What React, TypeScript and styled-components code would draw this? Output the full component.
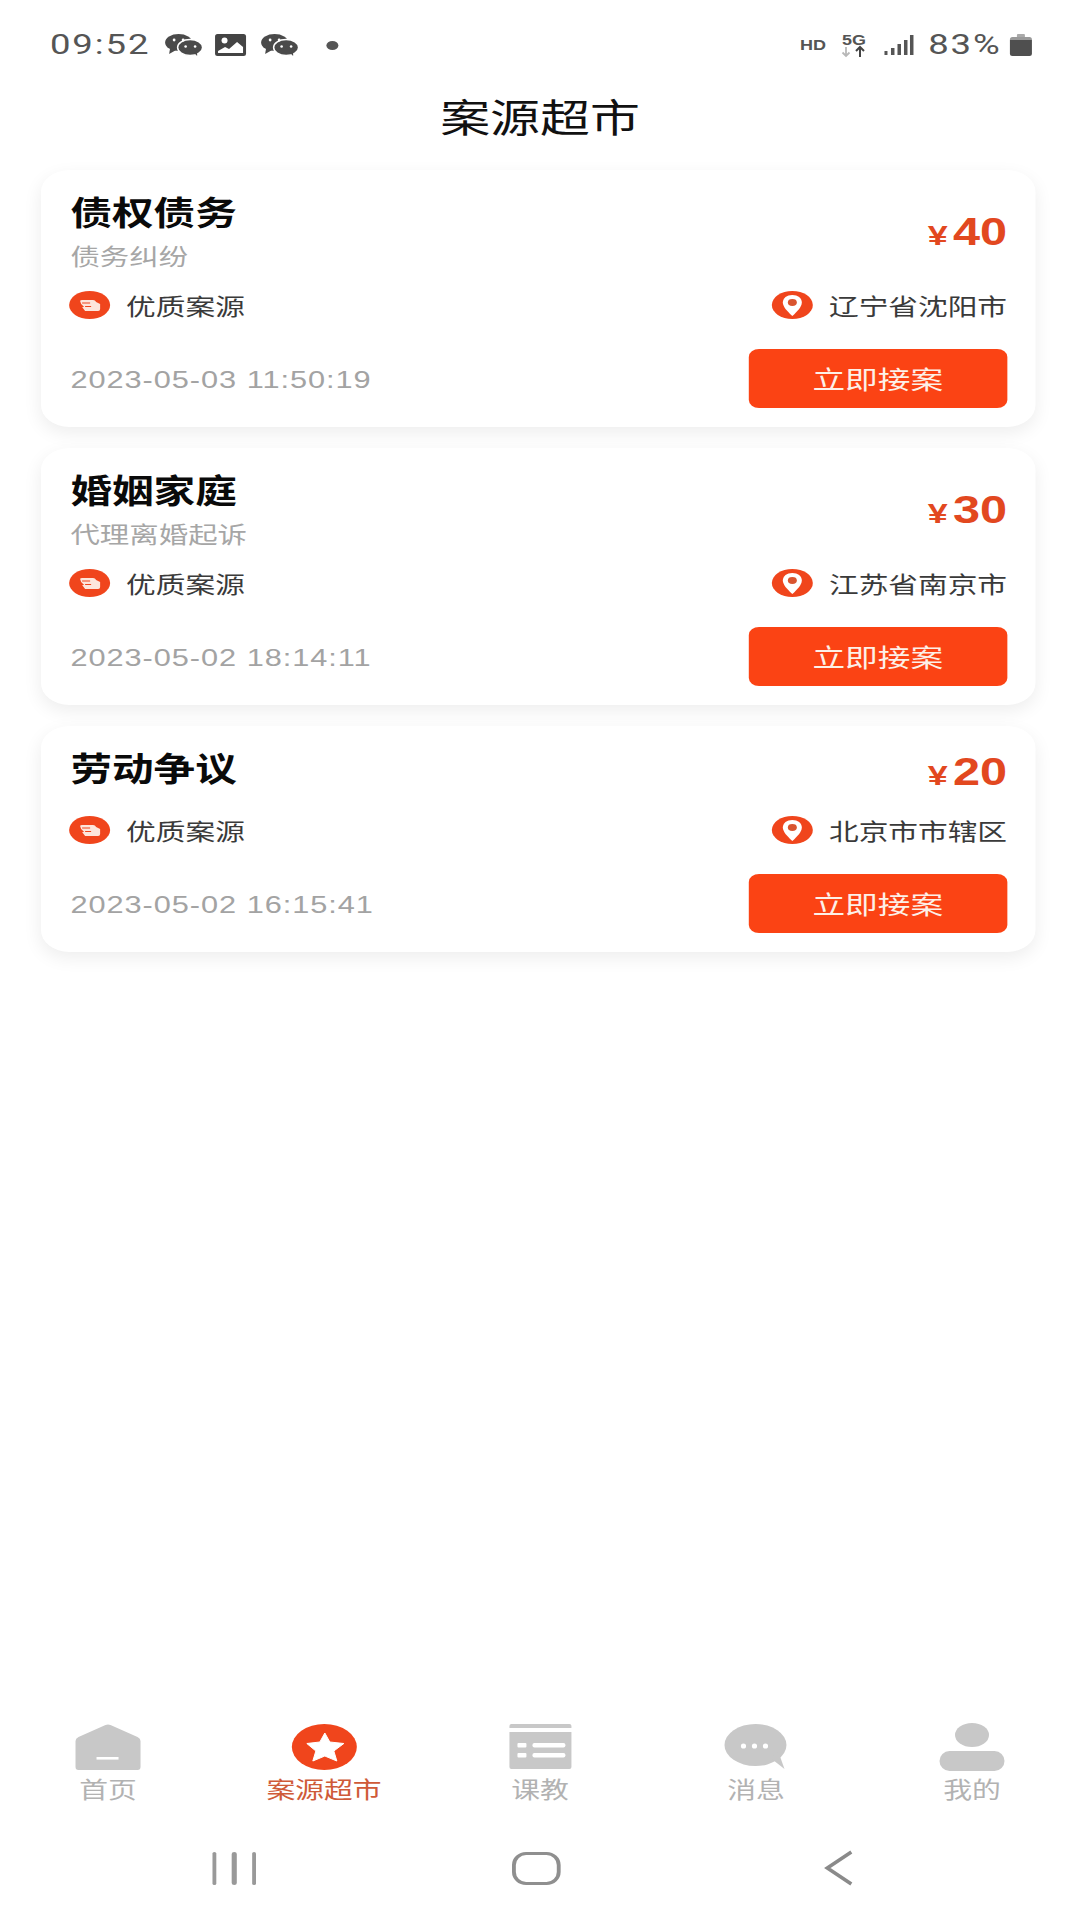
import React from 'react';
import styled, { createGlobalStyle } from 'styled-components';

const STRETCH = 1.28;
const SANS = `Roboto, "Noto Sans CJK SC", "Liberation Sans", sans-serif`;
const DATE_FONT = `"Liberation Sans", Arial, sans-serif`;
const ORANGE = '#f0451c';
const TAB_GREY = '#c8c8c8';

const GlobalStyle = createGlobalStyle`
  html, body {
    margin: 0;
    padding: 0;
    background: #fff;
    overflow: hidden;
  }
  #root {
    width: ${1080 / STRETCH}px;
    height: 1920px;
    transform: scaleX(${STRETCH});
    transform-origin: 0 0;
  }
`;

const Page = styled.div`
  display: flex;
  flex-direction: column;
  height: 1920px;
  font-family: ${SANS};
  background: #fff;
`;

const StatusBar = styled.div`
  display: flex;
  align-items: center;
  justify-content: space-between;
  height: 90px;
  padding: 0 38px 0 39px;
  color: #555;
`;

const StatusGroup = styled.div`
  display: flex;
  align-items: center;
`;

const StatusText = styled.span<{ $ml?: number }>`
  font-size: 28.5px;
  letter-spacing: 1.5px;
  line-height: 40px;
  margin-left: ${(p) => p.$ml ?? 0}px;
`;

const Glyph = styled.svg<{ $ml?: number }>`
  display: block;
  overflow: visible;
  margin-left: ${(p) => p.$ml ?? 0}px;
  flex: none;
`;

const Title = styled.div`
  height: 58px;
  line-height: 58px;
  text-align: center;
  font-size: 39px;
  color: #111;
`;

const List = styled.div`
  flex: 1;
  display: flex;
  flex-direction: column;
  gap: 21px;
  padding: 22px 35px 0 32px;
`;

const Card = styled.div`
  background: #fff;
  border-radius: 22px;
  padding: 24px 22px 19px 23px;
  box-shadow: 0 6px 16px rgba(0, 0, 0, 0.07);
`;

const CardTop = styled.div`
  display: flex;
  align-items: center;
  justify-content: space-between;
`;

const Heading = styled.div`
  font-size: 32.5px;
  font-weight: 700;
  line-height: 40px;
  margin-bottom: 10px;
  color: #0a0a0a;
`;

const SubHeading = styled.div`
  font-size: 23px;
  line-height: 34px;
  margin-top: -3px;
  color: #a6a6a6;
`;

const Price = styled.div`
  display: flex;
  align-items: baseline;
  margin-bottom: 5px;
  font-family: ${DATE_FONT};
  font-weight: 700;
  color: #e2481f;
`;

const Yen = styled.span`
  font-size: 28px;
  margin-right: 4px;
`;

const Amount = styled.span`
  font-size: 38px;
`;

const InfoRow = styled.div`
  display: flex;
  align-items: center;
  justify-content: space-between;
  height: 30px;
  margin: 15px 0 0 -1.5px;
`;

const Info = styled.div`
  display: flex;
  align-items: center;
  gap: 13px;
  font-size: 23.2px;
  color: #3a3a3a;
`;

const CardBottom = styled.div`
  display: flex;
  align-items: center;
  justify-content: space-between;
  margin-top: 29px;
`;

const DateText = styled.span`
  padding-top: 3px;
  font-family: ${DATE_FONT};
  font-size: 24px;
  letter-spacing: 0.75px;
  color: #a3a3a3;
`;

const TakeButton = styled.button`
  width: 202px;
  height: 59px;
  border: 0;
  padding: 0 0 3px;
  border-radius: 8px;
  background: #fb4314;
  color: #fdf0e8;
  font-family: ${SANS};
  font-size: 25.5px;
`;

const TabBar = styled.div`
  display: grid;
  grid-template-columns: repeat(5, 1fr);
  height: 93px;
`;

const Tab = styled.div<{ $active?: boolean }>`
  display: flex;
  flex-direction: column;
  align-items: center;
  gap: 7px;
  font-size: 22.5px;
  line-height: 26px;
  color: ${(p) => (p.$active ? '#cf5a38' : '#b2b2b2')};
`;

const TabIcon = styled.div`
  display: flex;
  align-items: center;
  height: 47px;
`;

const NavBar = styled.div`
  display: grid;
  grid-template-columns: repeat(3, 236.3px);
  align-items: center;
  height: 104px;
  padding-left: 64.8px;
`;

const NavSlot = styled.div`
  display: flex;
  justify-content: center;
`;

const Bars = styled.div`
  display: flex;
  gap: 12px;
`;

const Bar = styled.div`
  width: 3.6px;
  height: 33px;
  border-radius: 2px;
  background: #999;
`;

const HomeKey = styled.div`
  box-sizing: border-box;
  width: 38px;
  height: 33px;
  border: 3.4px solid #8f8f8f;
  border-radius: 11px / 13px;
`;

// svg helper: draws in real screen pixels, the page stretch is taken out of its width
const Draw = ({ w, h, ml, children }: { w: number; h: number; ml?: number; children: React.ReactNode }) => (
  <Glyph $ml={ml} width={w / STRETCH} height={h} viewBox={`0 0 ${w} ${h}`} preserveAspectRatio="none">
    {children}
  </Glyph>
);

const WeChat = ({ ml }: { ml: number }) => (
  <Draw w={37} h={22} ml={ml}>
    <ellipse cx="13.5" cy="8.5" rx="13.5" ry="8.5" fill="#4a4a4a" />
    <path d="M5 14 L4 20 L11 16 Z" fill="#4a4a4a" />
    <ellipse cx="25" cy="13.5" rx="12.5" ry="8" fill="#4a4a4a" stroke="#fff" strokeWidth="1.5" />
    <path d="M29 19 L32 22 L32 17 Z" fill="#4a4a4a" />
    <circle cx="9" cy="6" r="1.4" fill="#fff" />
    <circle cx="18" cy="6" r="1.4" fill="#fff" />
    <circle cx="20.5" cy="12.5" r="1.3" fill="#fff" />
    <circle cx="30" cy="12.5" r="1.3" fill="#fff" />
  </Draw>
);

const Picture = () => (
  <Draw w={31} h={22} ml={10}>
    <rect width="31" height="22" rx="2.5" fill="#444" />
    <circle cx="9.5" cy="6.5" r="3" fill="#fff" />
    <path d="M3 17 L10 13 L14 15 L22 8 L28 13 V19 H3 Z" fill="#fff" />
  </Draw>
);

const Signal = () => (
  <Draw w={29} h={20} ml={15}>
    <rect x="0" y="16" width="3" height="4" fill="#555" />
    <rect x="6.5" y="13" width="3.5" height="7" fill="#555" />
    <rect x="13" y="9" width="3.5" height="11" fill="#555" />
    <rect x="19.5" y="5" width="3.5" height="15" fill="#555" />
    <rect x="25.5" y="0" width="3.5" height="20" fill="#555" />
  </Draw>
);

const NetworkType = () => (
  <Draw w={66} h={23}>
    <text x="0" y="15.5" fontFamily={DATE_FONT} fontWeight="700" fontSize="15" fill="#555" textLength={26} lengthAdjust="spacingAndGlyphs">HD</text>
    <text x="42" y="10.5" fontFamily={DATE_FONT} fontWeight="700" fontSize="14" fill="#555" textLength={24} lengthAdjust="spacingAndGlyphs">5G</text>
    <path d="M46 13 V22 M42.5 18.5 L46 22 L49.5 18.5" stroke="#b8b8b8" strokeWidth="1.8" fill="none" />
    <path d="M60 23 V13 M56 17 L60 13 L64 17" stroke="#444" strokeWidth="2" fill="none" />
  </Draw>
);

const Battery = () => (
  <Draw w={22} h={22} ml={6}>
    <rect x="7" y="0" width="8" height="4" rx="1" fill="#aaa" />
    <path d="M2.5 3 H19.5 Q22 3 22 5.5 V6 H0 V5.5 Q0 3 2.5 3 Z" fill="#999" />
    <path d="M0 6 H22 V19.5 Q22 22 19.5 22 H2.5 Q0 22 0 19.5 Z" fill="#4f4f4f" />
  </Draw>
);

const QualityIcon = () => (
  <Draw w={41} h={28}>
    <ellipse cx="20.5" cy="14" rx="20.5" ry="14" fill={ORANGE} />
    <path d="M11 10 Q11 9 13 9 H24 Q26 9 27 11 L31 13 V18 Q31 20 29 20 H16 L13 16 H15 L12 13 Z" fill="#fde6dc" />
    <path d="M13 12 H21 M16 15.5 H22" stroke={ORANGE} strokeWidth="1.2" />
  </Draw>
);

const PinIcon = () => (
  <Draw w={41} h={28}>
    <ellipse cx="20.5" cy="14" rx="20.5" ry="14" fill={ORANGE} />
    <path d="M20.5 25 C15 20 11 15.5 11 11.5 C11 7 15 4 20.5 4 C26 4 30 7 30 11.5 C30 15.5 26 20 20.5 25 Z" fill="#fff" />
    <ellipse cx="20.5" cy="11.5" rx="4.5" ry="3.4" fill="#d9542f" />
  </Draw>
);

const HomeTab = () => (
  <Draw w={65} h={46}>
    <path d="M3 13 L30 1 Q32.5 0 35 1 L62 13 Q65 14.5 65 17 V43 Q65 46 62 46 H3 Q0 46 0 43 V17 Q0 14.5 3 13 Z" fill={TAB_GREY} />
    <rect x="21" y="33" width="22" height="2.6" fill="#fff" />
  </Draw>
);

const StarTab = () => (
  <Draw w={65} h={46}>
    <ellipse cx="32.5" cy="23" rx="32.5" ry="23" fill={ORANGE} />
    <path d="M33 9 L38 18 L52 19.5 L42 27 L45 37 L33 32 L21 37 L24 27 L15 19.5 L28 18 Z" fill="#fff" stroke="#fff" strokeWidth="1" strokeLinejoin="round" />
  </Draw>
);

const LessonTab = () => (
  <Draw w={62} h={46}>
    <path d="M2 0 H60 Q62 0 62 2 V4 H0 V2 Q0 0 2 0 Z" fill={TAB_GREY} />
    <path d="M0 8 H62 V43 Q62 45 60 45 H2 Q0 45 0 43 Z" fill={TAB_GREY} />
    <rect x="8" y="19" width="9" height="4.5" rx="1" fill="#fff" />
    <rect x="8" y="29" width="9" height="4.5" rx="1" fill="#fff" />
    <rect x="23" y="19" width="33" height="4.5" rx="2" fill="#fff" />
    <rect x="23" y="29" width="33" height="4.5" rx="2" fill="#fff" />
  </Draw>
);

const ChatTab = () => (
  <Draw w={62} h={45}>
    <ellipse cx="31" cy="21" rx="31" ry="21" fill={TAB_GREY} />
    <path d="M46 34 L60 45 L54 28 Z" fill={TAB_GREY} />
    <circle cx="19" cy="22" r="2.6" fill="#fff" />
    <circle cx="30" cy="22" r="2.6" fill="#fff" />
    <circle cx="41" cy="22" r="2.6" fill="#fff" />
  </Draw>
);

const PersonTab = () => (
  <Draw w={65} h={48}>
    <ellipse cx="32.5" cy="12" rx="17" ry="12" fill={TAB_GREY} />
    <rect x="0" y="28" width="65" height="20" rx="10" fill={TAB_GREY} />
  </Draw>
);

const BackKey = () => (
  <Draw w={29} h={36}>
    <path d="M27 2 L3 18 L27 34" stroke="#8a8a8a" strokeWidth="3.6" fill="none" />
  </Draw>
);

const cases = [
  { title: '债权债务', sub: '债务纠纷', price: 40, city: '辽宁省沈阳市', time: '2023-05-03 11:50:19' },
  { title: '婚姻家庭', sub: '代理离婚起诉', price: 30, city: '江苏省南京市', time: '2023-05-02 18:14:11' },
  { title: '劳动争议', price: 20, city: '北京市市辖区', time: '2023-05-02 16:15:41' },
];

const tabs = [
  { label: '首页', icon: <HomeTab /> },
  { label: '案源超市', icon: <StarTab />, active: true },
  { label: '课教', icon: <LessonTab /> },
  { label: '消息', icon: <ChatTab /> },
  { label: '我的', icon: <PersonTab /> },
];

export default function App() {
  return (
    <Page>
      <GlobalStyle />
      <StatusBar>
        <StatusGroup>
          <StatusText>09:52</StatusText>
          <WeChat ml={12} />
          <Picture />
          <WeChat ml={11} />
          <Draw w={12} h={9} ml={22}>
            <ellipse cx="6" cy="4.5" rx="6" ry="4.5" fill="#555" />
          </Draw>
        </StatusGroup>
        <StatusGroup>
          <NetworkType />
          <Signal />
          <StatusText $ml={11}>83%</StatusText>
          <Battery />
        </StatusGroup>
      </StatusBar>
      <Title>案源超市</Title>
      <List>
        {cases.map((c) => (
          <Card key={c.title}>
            <CardTop>
              <div>
                <Heading>{c.title}</Heading>
                {c.sub && <SubHeading>{c.sub}</SubHeading>}
              </div>
              <Price>
                <Yen>¥</Yen>
                <Amount>{c.price}</Amount>
              </Price>
            </CardTop>
            <InfoRow>
              <Info>
                <QualityIcon />
                优质案源
              </Info>
              <Info>
                <PinIcon />
                {c.city}
              </Info>
            </InfoRow>
            <CardBottom>
              <DateText>{c.time}</DateText>
              <TakeButton>立即接案</TakeButton>
            </CardBottom>
          </Card>
        ))}
      </List>
      <TabBar>
        {tabs.map((t) => (
          <Tab key={t.label} $active={t.active}>
            <TabIcon>{t.icon}</TabIcon>
            {t.label}
          </Tab>
        ))}
      </TabBar>
      <NavBar>
        <NavSlot>
          <Bars>
            <Bar />
            <Bar />
            <Bar />
          </Bars>
        </NavSlot>
        <NavSlot>
          <HomeKey />
        </NavSlot>
        <NavSlot>
          <BackKey />
        </NavSlot>
      </NavBar>
    </Page>
  );
}
